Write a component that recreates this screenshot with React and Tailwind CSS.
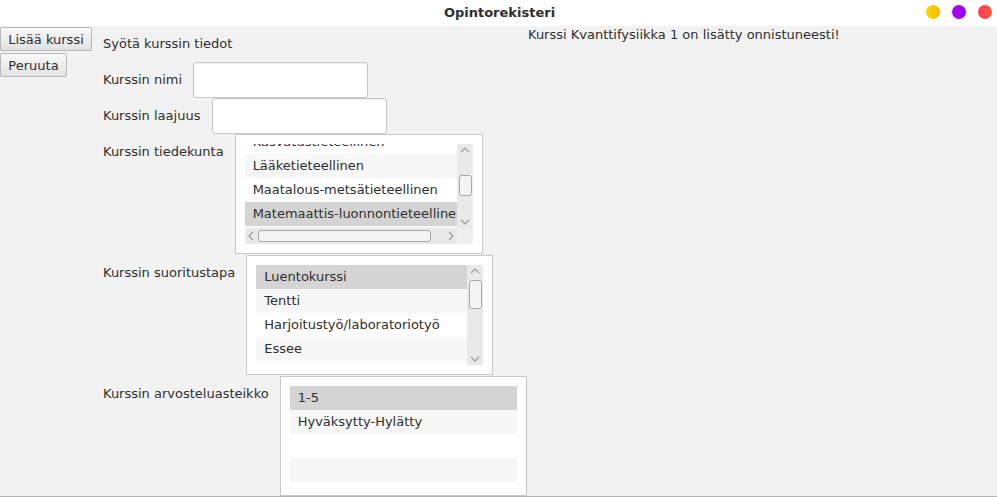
const font = { fontFamily: '"DejaVu Sans", "Liberation Sans", sans-serif' }

function Chevron({ dir }) {
  const d = {
    up: 'M1 6 L5 2 L9 6',
    down: 'M1 2 L5 6 L9 2',
    left: 'M6 1 L2 5 L6 9',
    right: 'M2 1 L6 5 L2 9',
  }[dir]
  const box = dir === 'up' || dir === 'down' ? '0 0 10 8' : '0 0 8 10'
  const w = dir === 'up' || dir === 'down' ? 10 : 8
  const h = dir === 'up' || dir === 'down' ? 8 : 10
  return (
    <svg width={w} height={h} viewBox={box}>
      <path d={d} fill="none" stroke="#9a9a9a" strokeWidth="1.2" />
    </svg>
  )
}

function VScroll({ thumbTop, thumbHeight }) {
  return (
    <div className="w-[16px] h-full bg-[#e9e9e9] flex flex-col items-center justify-between py-[2px] relative">
      <Chevron dir="up" />
      <div
        className="absolute left-[2px] w-[13px] rounded-[3px] border border-[#a8a8a8] bg-[#f4f4f4]"
        style={{ top: thumbTop, height: thumbHeight }}
      />
      <Chevron dir="down" />
    </div>
  )
}

function Row({ text, bg }) {
  return (
    <div className={`h-[24px] shrink-0 flex items-center pl-[8px] whitespace-nowrap ${bg}`}>{text}</div>
  )
}

function TextField({ w }) {
  return <div className={`${w} h-[36px] bg-white border border-[#c6c6c6] rounded-[3px] shadow-[inset_0_1px_1px_rgba(0,0,0,0.06)]`} />
}

export default function App() {
  return (
    <div className="w-[997px] h-[497px] overflow-hidden bg-white text-[13px] text-[#2f2f2f]" style={font}>
      <div className="h-[26px] bg-white relative flex items-center justify-center">
        <span className="font-bold text-[13px] pl-[2px]">Opintorekisteri</span>
        <div className="absolute right-[5px] top-[5px] flex gap-[12px]">
          <div className="w-[14px] h-[14px] rounded-full bg-gradient-to-r from-[#f5d800] to-[#ffb800]" />
          <div className="w-[14px] h-[14px] rounded-full bg-gradient-to-r from-[#b000e8] to-[#9000ff]" />
          <div className="w-[14px] h-[14px] rounded-full bg-gradient-to-r from-[#ff3a5c] to-[#ff5a30]" />
        </div>
      </div>

      <div className="h-[471px] bg-[#f2f2f2] border-b border-[#b4b4b4] flex items-start overflow-hidden">
        <div className="flex flex-col gap-[2px] pt-[1px] w-[92px] shrink-0">
          <button className="w-[92px] h-[24px] border border-[#b8b8b8] rounded-[2px] bg-gradient-to-b from-[#f9f9f9] to-[#e2e2e2] text-[13px] text-[#2f2f2f] leading-none">
            Lisää kurssi
          </button>
          <button className="w-[67px] h-[24px] border border-[#b8b8b8] rounded-[2px] bg-gradient-to-b from-[#f9f9f9] to-[#e2e2e2] text-[13px] text-[#2f2f2f] leading-none">
            Peruuta
          </button>
        </div>

        <div className="w-[425px] shrink-0 ml-[11px] flex flex-col">
          <div className="h-[36px] flex items-center">Syötä kurssin tiedot</div>

          <div className="h-[36px] flex items-center gap-[11px]">
            <span>Kurssin nimi</span>
            <TextField w="w-[175px]" />
          </div>

          <div className="h-[36px] flex items-center gap-[12px]">
            <span>Kurssin laajuus</span>
            <TextField w="w-[175px]" />
          </div>

          <div className="flex items-start gap-[11px]">
            <span className="mt-[10px] leading-4">Kurssin tiedekunta</span>
            <div className="w-[248px] h-[120px] bg-white border border-[#c8c8c8] p-[9px]">
              <div className="flex h-[84px]">
                <div className="w-[212px] overflow-hidden flex flex-col">
                  <div className="mt-[-14px] flex flex-col">
                    <Row text="Kasvatustieteellinen" bg="bg-white" />
                    <Row text="Lääketieteellinen" bg="bg-[#f7f7f7]" />
                    <Row text="Maatalous-metsätieteellinen" bg="bg-white" />
                    <Row text="Matemaattis-luonnontieteellinen" bg="bg-[#d4d4d4]" />
                    <Row text="Oikeustieteellinen" bg="bg-[#f7f7f7]" />
                  </div>
                </div>
                <VScroll thumbTop={31} thumbHeight={21} />
              </div>
              <div className="flex h-[16px]">
                <div className="w-[212px] bg-[#e9e9e9] flex items-center justify-between px-[2px] relative">
                  <Chevron dir="left" />
                  <div className="absolute left-[13px] top-[2px] w-[173px] h-[12px] rounded-[3px] border border-[#a8a8a8] bg-[#f4f4f4]" />
                  <Chevron dir="right" />
                </div>
                <div className="w-[16px] bg-[#f0f0f0]" />
              </div>
            </div>
          </div>

          <div className="flex items-start gap-[11px] mt-[1px]">
            <span className="mt-[10px] leading-4">Kurssin suoritustapa</span>
            <div className="w-[247px] h-[120px] bg-white border border-[#c8c8c8] p-[9px]">
              <div className="flex h-[100px]">
                <div className="w-[212px] overflow-hidden flex flex-col">
                  <Row text="Luentokurssi" bg="bg-[#d4d4d4]" />
                  <Row text="Tentti" bg="bg-[#f7f7f7]" />
                  <Row text="Harjoitustyö/laboratoriotyö" bg="bg-white" />
                  <Row text="Essee" bg="bg-[#f7f7f7]" />
                  <Row text="Muu" bg="bg-white" />
                </div>
                <VScroll thumbTop={15} thumbHeight={29} />
              </div>
            </div>
          </div>

          <div className="flex items-start gap-[11px] mt-[1px]">
            <span className="mt-[10px] leading-4">Kurssin arvosteluasteikko</span>
            <div className="w-[247px] h-[120px] bg-white border border-[#c8c8c8] p-[9px]">
              <div className="flex flex-col">
                <Row text="1-5" bg="bg-[#d4d4d4]" />
                <Row text="Hyväksytty-Hylätty" bg="bg-[#f7f7f7]" />
                <Row text="" bg="bg-white" />
                <Row text="" bg="bg-[#f7f7f7]" />
              </div>
            </div>
          </div>
        </div>

        <div className="pt-[1px] leading-4 whitespace-nowrap">Kurssi Kvanttifysiikka 1 on lisätty onnistuneesti!</div>
      </div>
    </div>
  )
}
